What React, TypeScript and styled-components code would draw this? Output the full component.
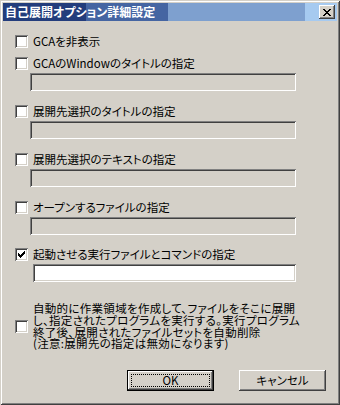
import React from "react";
import styled, { createGlobalStyle } from "styled-components";

const Global = createGlobalStyle`
  html, body { margin: 0; padding: 0; background: #d4d0c8; }
  body {
    font-family: "Noto Sans CJK JP", "Noto Sans", sans-serif;
    font-feature-settings: "palt";
  }
`;

const Win = styled.div`
  width: 340px;
  height: 405px;
  box-sizing: border-box;
  padding: 3px;
  background: #d4d0c8;
  box-shadow: inset 1px 1px #d4d0c8, inset -1px -1px #404040, inset 2px 2px #ffffff,
    inset -2px -2px #808080;
  display: flex;
  flex-direction: column;
`;

const TitleBar = styled.div`
  height: 18px;
  flex: none;
  display: flex;
  align-items: center;
  justify-content: space-between;
  padding: 0 2px 0 2px;
  background: linear-gradient(
    to right,
    #233d7c 0px,
    #233d7c 83px,
    #4565a2 83px,
    #4565a2 165px,
    #7ea0cf 165px,
    #7ea0cf 302px,
    #a6caf0 302px
  );
`;

const TitleText = styled.span`
  color: #fff;
  font-weight: bold;
  font-size: 12px;
  line-height: 18px;
  white-space: nowrap;
`;

const CloseBtn = styled.div`
  width: 16px;
  height: 14px;
  background: #d4d0c8;
  box-shadow: inset -1px -1px #404040, inset 1px 1px #ffffff, inset -2px -2px #808080,
    inset 2px 2px #d4d0c8;
  display: flex;
  align-items: center;
  justify-content: center;
`;

const Body = styled.div`
  flex: 1;
  display: flex;
  flex-direction: column;
  padding: 14px 11px 0 12px;
`;

const Group = styled.div<{ $gap: number }>`
  display: flex;
  flex-direction: column;
  margin-top: ${(p) => p.$gap}px;
`;

const Row = styled.label`
  display: flex;
  align-items: center;
  gap: 5px;
  min-height: 13px;
  font-size: 11.5px;
  line-height: 13px;
  color: #000;
  white-space: nowrap;
`;

const Box = styled.span`
  width: 13px;
  height: 13px;
  flex: none;
  box-sizing: border-box;
  background: #fff;
  box-shadow: inset 1px 1px #808080, inset -1px -1px #ffffff, inset 2px 2px #404040,
    inset -2px -2px #d4d0c8;
  display: flex;
  align-items: center;
  justify-content: center;
`;

const Field = styled.div<{ $enabled?: boolean; $indent: number }>`
  margin: 3px 0 0 ${(p) => p.$indent}px;
  width: ${(p) => 281 - p.$indent}px;
  height: 18px;
  box-sizing: border-box;
  background: ${(p) => (p.$enabled ? "#ffffff" : "#d4d0c8")};
  box-shadow: inset 1px 1px #808080, inset -1px -1px #ffffff, inset 2px 2px #404040,
    inset -2px -2px #d4d0c8;
`;

const Multi = styled.span`
  font-size: 11.5px;
  line-height: 11.75px;
  letter-spacing: 0.3px;
  white-space: pre;
`;

const Buttons = styled.div`
  display: flex;
  justify-content: flex-end;
  gap: 25px;
  margin-top: 20px;
`;

const Btn = styled.div<{ $default?: boolean }>`
  width: 87px;
  height: 21px;
  box-sizing: border-box;
  font-size: 11.5px;
  display: flex;
  align-items: center;
  justify-content: center;
  position: relative;
  background: #d4d0c8;
  box-shadow: ${(p) =>
    p.$default
      ? "inset 1px 1px #000, inset -1px -1px #000, inset -2px -2px #404040, inset 2px 2px #ffffff, inset -3px -3px #808080, inset 3px 3px #d4d0c8"
      : "inset -1px -1px #404040, inset 1px 1px #ffffff, inset -2px -2px #808080, inset 2px 2px #d4d0c8"};
`;

const Focus = styled.span`
  position: absolute;
  left: 4px;
  top: 4px;
  right: 4px;
  bottom: 4px;
  border: 1px dotted #000;
`;

const BtnText = styled.span`
  position: relative;
  line-height: 13px;
`;

const Check = () => (
  <svg width="7" height="7" viewBox="0 0 7 7" shapeRendering="crispEdges">
    <path d="M0 2h1v3h-1zM1 3h1v3h-1zM2 4h1v3h-1zM3 3h1v3h-1zM4 2h1v3h-1zM5 1h1v3h-1zM6 0h1v3h-1z" fill="#000" />
  </svg>
);

const CloseX = () => (
  <svg width="8" height="7" viewBox="0 0 8 7" shapeRendering="crispEdges">
    <path
      d="M0 0h2v1h-2zM6 0h2v1h-2zM1 1h2v1h-2zM5 1h2v1h-2zM2 2h4v1h-4zM3 3h2v1h-2zM2 4h4v1h-4zM1 5h2v1h-2zM5 5h2v1h-2zM0 6h2v1h-2zM6 6h2v1h-2z"
      fill="#000"
    />
  </svg>
);

const CheckItem: React.FC<{ label: string; checked?: boolean }> = ({ label, checked }) => (
  <Row>
    <Box>{checked && <Check />}</Box>
    <span>{label}</span>
  </Row>
);

const fields: { label: string; gap: number }[] = [
  { label: "GCAのWindowのタイトルの指定", gap: 9 },
  { label: "展開先選択のタイトルの指定", gap: 14 },
  { label: "展開先選択のテキストの指定", gap: 14 },
  { label: "オープンするファイルの指定", gap: 14 },
];

export default function App() {
  return (
    <>
      <Global />
      <Win>
        <TitleBar>
          <TitleText>自己展開オプション詳細設定</TitleText>
          <CloseBtn>
            <CloseX />
          </CloseBtn>
        </TitleBar>
        <Body>
          <CheckItem label="GCAを非表示" />
          {fields.map((f) => (
            <Group key={f.label} $gap={f.gap}>
              <CheckItem label={f.label} />
              <Field $indent={15} />
            </Group>
          ))}
          <Group $gap={13}>
            <CheckItem label="起動させる実行ファイルとコマンドの指定" checked />
            <Field $indent={18} $enabled />
          </Group>
          <Group $gap={21}>
            <Row>
              <Box />
              <Multi>
                {"自動的に作業領域を作成して、ファイルをそこに展開\nし、指定されたプログラムを実行する。実行プログラム\n終了後、展開されたファイルセットを自動削除\n(注意:展開先の指定は無効になります)"}
              </Multi>
            </Row>
          </Group>
          <Buttons>
            <Btn $default>
              <Focus />
              <BtnText>OK</BtnText>
            </Btn>
            <Btn>
              <BtnText>キャンセル</BtnText>
            </Btn>
          </Buttons>
        </Body>
      </Win>
    </>
  );
}
